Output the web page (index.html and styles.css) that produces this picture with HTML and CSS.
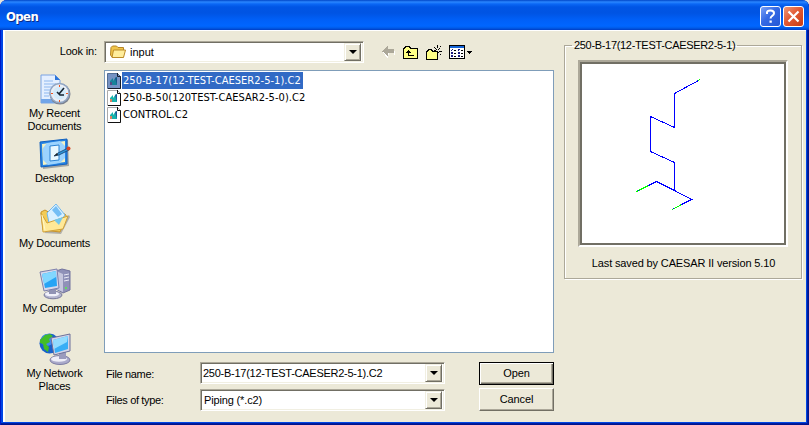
FILE: index.html
```html
<!DOCTYPE html>
<html lang="en-US">
    <head>
        <meta charset="utf-8">
        <title>Open</title>
        <link rel="stylesheet" href="styles.css">
    </head>
    <body>
        <div class="dialog">
            <div class="titlebar">
                <span class="title">Open</span>
                <div class="tbtn help"><svg width="19" height="19" viewBox="0 0 19 19"><path d="M6 7V5.500Q6 3.500 9.500 3.500Q13 3.500 13 6.200Q13 8 11 9Q9.600 9.800 9.600 11.500" fill="none" stroke="#fff" stroke-width="2"/><path d="M8.500 13.500h2.300v2.300h-2.300z" fill="#fff"/></svg></div>
                <div class="tbtn close"><svg width="19" height="19" viewBox="0 0 19 19"><path d="M4.500 4.500l10 10M14.500 4.500l-10 10" stroke="#fff" stroke-width="2.200"/></svg></div>
            </div>
            <div class="client">
                <div class="side">
                    <div class="lookin">Look in:</div>
                    <div class="places">
                        <div class="place">
                            <svg width="32" height="32" viewBox="0 0 32 32">
                                <path d="M2 2h14l5 5v23H2z" fill="#e4efff" stroke="#7ba3e4"/>
                                <path d="M16 2v5h5z" fill="#2d75d9"/>
                                <path d="M5 8h9M5 11h12M5 14h9M5 17h6M5 20h5M5 23h5" stroke="#8db7ef"/>
                                <path d="M2 26h18v4H2z" fill="#72a5e8"/>
                                <circle cx="21" cy="21" r="10.500" fill="#7b8290"/>
                                <circle cx="20.500" cy="20" r="9.500" fill="#e9eef5" stroke="#91a6c4" stroke-width="1.500"/>
                                <circle cx="20.500" cy="20" r="6.500" fill="#d3eafa"/>
                                <path d="M20 21l5-6M18 19l3 3h4" fill="none" stroke="#172532" stroke-width="1.600"/>
                                <path d="M20 12h1v2h-1zM20 27h1v2h-1zM12 20h2v1h-2zM27 20h2v1h-2z" fill="#f0531e"/>
                            </svg>
                            <span>My Recent<br>Documents</span>
                        </div>
                        <div class="place">
                            <svg width="32" height="32" viewBox="0 0 32 32">
                                <path d="M3 6L29 2l1 26-26 3z" fill="#59616c" opacity=".5"/>
                                <path d="M1 4L28 1v25L2 29z" fill="#2684e5" stroke="#1261be"/>
                                <path d="M3 6l23-3v21L4 27z" fill="#f5f2c2"/>
                                <path d="M8 5l13-2 5 5v12l-5 5-12 2-5-5V10z" fill="#9bd3ff"/>
                                <path d="M11 8l9-1v15l-9 1z" fill="#e8f7ff" stroke="#2c83d3"/>
                                <path d="M15 18l4-3 10-5 1 2-10 5z" fill="#2d96da" stroke="#183f6d" stroke-width=".8"/>
                                <path d="M15 18l4-1-1-2z" fill="#222"/>
                                <circle cx="29.500" cy="10.500" r="2" fill="#d64522"/>
                            </svg>
                            <span>Desktop</span>
                        </div>
                        <div class="place">
                            <svg width="32" height="32" viewBox="0 0 32 32">
                                <path d="M5 30l17 1 9-17-1-2z" fill="#777" opacity=".5"/>
                                <path d="M2 9l4-2 5 3 15 1 2 3-7 15L4 27z" fill="#f3cc55" stroke="#c9942a"/>
                                <path d="M8 10l9-9 9 11-7 9-9-1z" fill="#d9f0ff" stroke="#72b8ed"/>
                                <path d="M13 7l4-4 6 8-4 3z" fill="#74bef5"/>
                                <path d="M2 10l6 10 21-7-5 13-20 3z" fill="#ffe997" stroke="#d1a138"/>
                                <path d="M15 17l9-3-4 8z" fill="#73c7ec"/>
                                <path d="M3 12l3 15" stroke="#fff8c9"/>
                            </svg>
                            <span>My Documents</span>
                        </div>
                        <div class="place">
                            <svg width="32" height="32" viewBox="0 0 32 32">
                                <path d="M17 3l6-2 8 2v19l-7 3-7-4z" fill="#8f91b8" stroke="#73749d"/>
                                <path d="M17 3l7 3v18l-7-3z" fill="#c5c6dd"/>
                                <path d="M25 7l5-1M25 10l5-1M25 13l5-1" stroke="#e9eaf5"/>
                                <path d="M26 19h2v2h-2z" fill="#60dc60"/>
                                <ellipse cx="14" cy="27" rx="9" ry="3.800" fill="#b4b5cf" stroke="#77789a"/>
                                <ellipse cx="13" cy="26" rx="7" ry="2.300" fill="#f1f1fa"/>
                                <path d="M10 20h7v6h-7z" fill="#9193b4"/>
                                <path d="M1 4l17-3 2 19-15 3z" fill="#d7d8eb" stroke="#7c7fab"/>
                                <path d="M3 6l14-3 1 15L6 20z" fill="#27a4f5"/>
                                <path d="M3 6l14-3v6L5 16z" fill="#82d7ff"/>
                            </svg>
                            <span>My Computer</span>
                        </div>
                        <div class="place">
                            <svg width="32" height="32" viewBox="0 0 32 32">
                                <circle cx="10.500" cy="10.500" r="10" fill="#1862cc"/>
                                <circle cx="8" cy="7" r="6" fill="#438cf0"/>
                                <path d="M1 7l5-5 5-1 3 2-4 3 1 3-4 2 3 3-1 5-4-3-1-5-3-1zM14 7l5 2-2 4-4-2z" fill="#43bd27"/>
                                <ellipse cx="21" cy="27" rx="10" ry="4.500" fill="#aaaacb" stroke="#7d7da4"/>
                                <ellipse cx="20" cy="26" rx="8" ry="2.800" fill="#eeeef8"/>
                                <path d="M20 19h7v7h-7z" fill="#9a9bbd"/>
                                <path d="M12 5l19-4v17l-16 4z" fill="#d3d4e8" stroke="#6d7199"/>
                                <path d="M14 7l15-4v13l-13 4z" fill="#38aef6"/>
                                <path d="M14 7l15-4-1 6-13 7z" fill="#92dcff"/>
                            </svg>
                            <span>My Network<br>Places</span>
                        </div>
                    </div>
                </div>
                <div class="main">
                    <div class="toolbar">
                        <div class="combo folder">
                            <svg class="folder-icon" width="16" height="14" viewBox="0 0 16 14"><path d="M1 2.500L2.500 1h4L8 2.500h5.500V12H2L.5 10z" fill="#f0c54b" stroke="#b58424"/><path d="M3.500 5h12l-2 7.500H2z" fill="#ffed9c" stroke="#bc8b29"/></svg>
                            <span class="value">input</span>
                            <i class="drop"></i>
                        </div>
                        <div class="tools">
                            <svg width="13" height="12" viewBox="0 0 13 12" shape-rendering="crispEdges"><path d="M1 6h6v3h6V5h-1v4H6v3H5z" fill="#fff"/><path d="M0 5h1V4h1V3h1V2h1V1h1V0h1v3h6v4H6v3H5V9H4V8H3V7H2V6H0z" fill="#aca899"/></svg>
                            <svg width="15" height="13" viewBox="0 0 15 13" shape-rendering="crispEdges"><path d="M.5 12.500v-10h1v-1h1v-1h4v1h1v1h7v10z" fill="#ffff86" stroke="#000"/><path d="M5 4h1v1h1v1h1v1H6v2h5v1H5V7H3V6h1V5h1z"/></svg>
                            <svg width="16" height="15" viewBox="0 0 16 15" shape-rendering="crispEdges"><path d="M.5 14.500v-8h1v-1h1v-1h3v1h1v1h5v8z" fill="#ffff86" stroke="#000"/><path d="M11 0h1v3h-1zM11 8h1v2h-1zM8 2h1v1H8zM9 3h1v1H9zM10 4h1v1h-1zM12 4h1v1h-1zM13 3h1v1h-1zM14 1h1v1h-1zM13 6h3v1h-3zM12 7h1v1h-1zM14 9h1v1h-1zM8 5h2v1H8z"/></svg>
                            <svg class="views" width="24" height="15" viewBox="0 0 24 15" shape-rendering="crispEdges"><path d="M.5.5h15v13H.5z" fill="#fff" stroke="#000"/><path d="M1 1h14v2H1z" fill="#1464d8"/><path d="M3 4h1v1h-1v1h-1v-1h1zM9 4h2v1h-1v1H9zM2 7h2v2H2zM9 7h2v2H9zM2 10h2v2H2zM9 10h2v2H9z" fill="#1b1b80"/><path d="M5 5h2v1H5zM12 5h2v1h-2zM5 8h2v1H5zM12 8h2v1h-2zM5 11h2v1H5zM12 11h2v1h-2zM18 6h5v1h-1v1h-1v1h-1V8h-1V7h-1z"/></svg>
                        </div>
                    </div>
                    <div class="files">
                        <div class="file selected">
                            <svg width="14" height="16" viewBox="0 0 14 16"><path d="M.5.5h10l3 3v12H.5z" fill="#7592c4" stroke="#526d94"/><path d="M10.500 0v3.500h3v12H1" fill="none" stroke="#151b2a"/><path d="M3 12V8l3-3v3l3-4 1 1v7z" fill="#178299"/><path d="M3 9h2v3H3z" fill="#554b86"/><path d="M8 5l2-1v8z" fill="#16558c"/></svg>
                            <span>250-B-17(12-TEST-CAESER2-5-1).C2</span>
                        </div>
                        <div class="file">
                            <svg width="14" height="16" viewBox="0 0 14 16"><path d="M.5.500h10l3 3v12H.5z" fill="#fff" stroke="#aaa"/><path d="M10.500 0v3.500h3v12H1" fill="none" stroke="#111"/><path d="M3 12V8l3-3v3l3-4 1 1v7z" fill="#18b4ac"/><path d="M3 9h2v3H3z" fill="#dc8060"/><path d="M8 5l2-1v8z" fill="#205b98"/></svg>
                            <span>250-B-50(120TEST-CAESAR2-5-0).C2</span>
                        </div>
                        <div class="file">
                            <svg width="14" height="16" viewBox="0 0 14 16"><path d="M.5.500h10l3 3v12H.5z" fill="#fff" stroke="#aaa"/><path d="M10.500 0v3.500h3v12H1" fill="none" stroke="#111"/><path d="M3 12V8l3-3v3l3-4 1 1v7z" fill="#18b4ac"/><path d="M3 9h2v3H3z" fill="#dc8060"/><path d="M8 5l2-1v8z" fill="#205b98"/></svg>
                            <span>CONTROL.C2</span>
                        </div>
                    </div>
                    <div class="fields">
                        <label>File name:</label>
                        <div class="combo"><span class="value name">250-B-17(12-TEST-CAESER2-5-1).C2</span><i class="drop"></i></div>
                        <div class="button default"><span>Open</span></div>
                        <label>Files of type:</label>
                        <div class="combo"><span class="value type">Piping (*.c2)</span><i class="drop"></i></div>
                        <div class="button"><span>Cancel</span></div>
                    </div>
                </div>
                <fieldset class="preview">
                    <legend>250-B-17(12-TEST-CAESER2-5-1)</legend>
                    <div class="frame">
                        <div class="canvas">
                            <svg width="202" height="179" viewBox="582 64 202 179" fill="none" shape-rendering="crispEdges">
                                <path d="M698.500 80.500L674.500 93.500V127.500L650.500 116.500V151.500L674.500 162.500V190.500M648.500 185.500L656.500 181.500L674.500 190.500L691.500 199.500L681.500 204.500" stroke="#00f"/>
                                <path d="M698 80.500L700 79.500M636.500 191.500L648.500 185.500M681.500 204.500L672.500 209.500" stroke="#0f0"/>
                                <path d="M638 190.500h1M673 208.500h1" stroke="#00f"/>
                            </svg>
                        </div>
                    </div>
                    <p><span>Last saved by CAESAR II version 5.10</span></p>
                </fieldset>
            </div>
        </div>
    </body>
</html>
```

FILE: styles.css
```css
body{
    margin: 0;
    background-color: #e4e4dc;
    font-family: "Liberation Sans", Arial, sans-serif;
    font-size: 11px;
    line-height: 13px;
    color: #000;
}
.dialog{
    box-sizing: border-box;
    width: 809px;
    height: 425px;
    padding: 0 3px 3px 3px;
    border-radius: 7px 7px 0 0;
    background-color: #0046e5;
    box-shadow: inset 1px 0 #0019c6, inset -1px -1px #00138c, inset -2px -2px #001ea0;
    overflow: hidden;
}
.titlebar{
    display: flex;
    align-items: center;
    gap: 2px;
    box-sizing: border-box;
    height: 30px;
    margin: 0 -3px;
    padding: 2px 5px 0 6px;
    background: linear-gradient(#0046c8 0, #2a86ff 2px, #0a67f5 4px, #0055e5 7px, #0054e3 13px, #0060f8 20px, #0066ff 26px, #005be8 28px, #003dc4 30px);
}
.title{
    flex: 1;
    color: #fff;
    font-family: "DejaVu Sans Condensed", "DejaVu Sans", sans-serif;
    font-size: 13px;
    font-weight: bold;
    letter-spacing: -0.6px;
    text-shadow: 1px 1px #0a2c87;
}
.tbtn{
    width: 19px;
    height: 19px;
    border: 1px solid #fff;
    border-radius: 3px;
}
.tbtn svg, .place svg, .file svg, .tools svg, .canvas svg{
    display: block;
}
.help{
    background: linear-gradient(135deg, #7aa1f5, #3569e4 45%, #2358d5);
}
.close{
    background: linear-gradient(135deg, #ee9877, #e25a35 45%, #c93b12);
}
.client{
    display: flex;
    box-sizing: border-box;
    height: 392px;
    border-top: 1px solid #fff;
    border-left: 2px solid #fff;
    background-color: #ece9d8;
}
.side{
    width: 99px;
}
.lookin{
    padding: 14px 7px 0 0;
    text-align: right;
    letter-spacing: -0.15px;
}
.places{
    padding-top: 15px;
}
.place{
    display: flex;
    flex-direction: column;
    align-items: center;
    gap: 2px;
    height: 65px;
    text-align: center;
    letter-spacing: -0.2px;
}
.main{
    width: 450px;
    padding-top: 10px;
}
.toolbar{
    display: flex;
    gap: 18px;
    height: 29px;
}
.combo{
    display: flex;
    align-items: center;
    box-sizing: border-box;
    height: 22px;
    border: 1px solid;
    border-color: #aca899 #fff #fff #aca899;
    box-shadow: inset 1px 1px #716f64, inset -1px -1px #f1efe2;
    padding: 2px;
    background-color: #fff;
}
.folder{
    width: 260px;
}
.folder-icon{
    margin: 0 4px 0 3px;
}
.value{
    flex: 1;
    white-space: nowrap;
}
.name{
    letter-spacing: -0.26px;
}
.type{
    letter-spacing: -0.15px;
}
.drop{
    display: flex;
    align-items: center;
    justify-content: center;
    box-sizing: border-box;
    width: 17px;
    height: 18px;
    border: 1px solid;
    border-color: #f1efe2 #716f64 #716f64 #f1efe2;
    box-shadow: inset 1px 1px #fff, inset -1px -1px #aca899;
    background-color: #ece9d8;
}
.drop:after{
    content: "";
    border: 4px solid transparent;
    border-top-color: #000;
    border-bottom: 0;
}
.tools{
    display: flex;
    align-items: center;
    gap: 8px;
    height: 22px;
}
.views{
    margin-left: -1px;
}
.files{
    box-sizing: border-box;
    height: 283px;
    border: 1px solid #7f9db9;
    padding: 1px 2px;
    background-color: #fff;
}
.file{
    display: flex;
    align-items: center;
    gap: 1px;
    height: 17px;
    font-family: "DejaVu Sans Condensed", "DejaVu Sans", sans-serif;
    font-size: 11px;
    letter-spacing: 0.03px;
}
.file span{
    padding: 2px 2px 2px 1px;
}
.selected span{
    background-color: #316ac5;
    color: #fff;
}
.fields{
    display: grid;
    grid-template-columns: 94px 245px 109px;
    grid-template-rows: 23px 23px;
    gap: 3px 0;
    padding: 9px 0 0 2px;
}
.fields label{
    align-self: center;
    padding-top: 1px;
    letter-spacing: -0.35px;
}
.fields .combo{
    align-self: start;
}
.fields .combo:nth-of-type(3){
    align-self: end;
}
.fields .value{
    padding-left: 1px;
}
.fields .name{
    padding-left: 0;
}
.fields .button{
    justify-self: end;
}
.button{
    display: flex;
    align-items: center;
    justify-content: center;
    box-sizing: border-box;
    width: 75px;
    height: 23px;
    border: 1px solid;
    border-color: #fff #716f64 #716f64 #fff;
    box-shadow: inset -1px -1px #aca899;
    letter-spacing: -0.15px;
}
.default{
    border-color: #000;
    box-shadow: inset 1px 1px #fff, inset -1px -1px #716f64, inset -2px -2px #aca899;
}
.preview{
    box-sizing: border-box;
    width: 238px;
    height: 240px;
    min-width: 0;
    margin: 8px 0 0 10px;
    padding: 8px 12px 0 13px;
    border: 1px solid #aca899;
    box-shadow: 1px 1px #fff, inset 1px 1px #fff;
}
.preview legend{
    margin-left: -6px;
    padding: 0 2px;
    white-space: nowrap;
    letter-spacing: -0.32px;
}
.frame{
    width: 206px;
    height: 183px;
    border: 2px solid;
    border-color: #aca899 #fff #fff #aca899;
}
.canvas{
    width: 202px;
    height: 179px;
    border: 2px solid;
    border-color: #716f64;
    background-color: #fff;
}
.preview p{
    margin: 10px 0 0;
    text-align: center;
    white-space: nowrap;
    letter-spacing: -0.14px;
}
```
